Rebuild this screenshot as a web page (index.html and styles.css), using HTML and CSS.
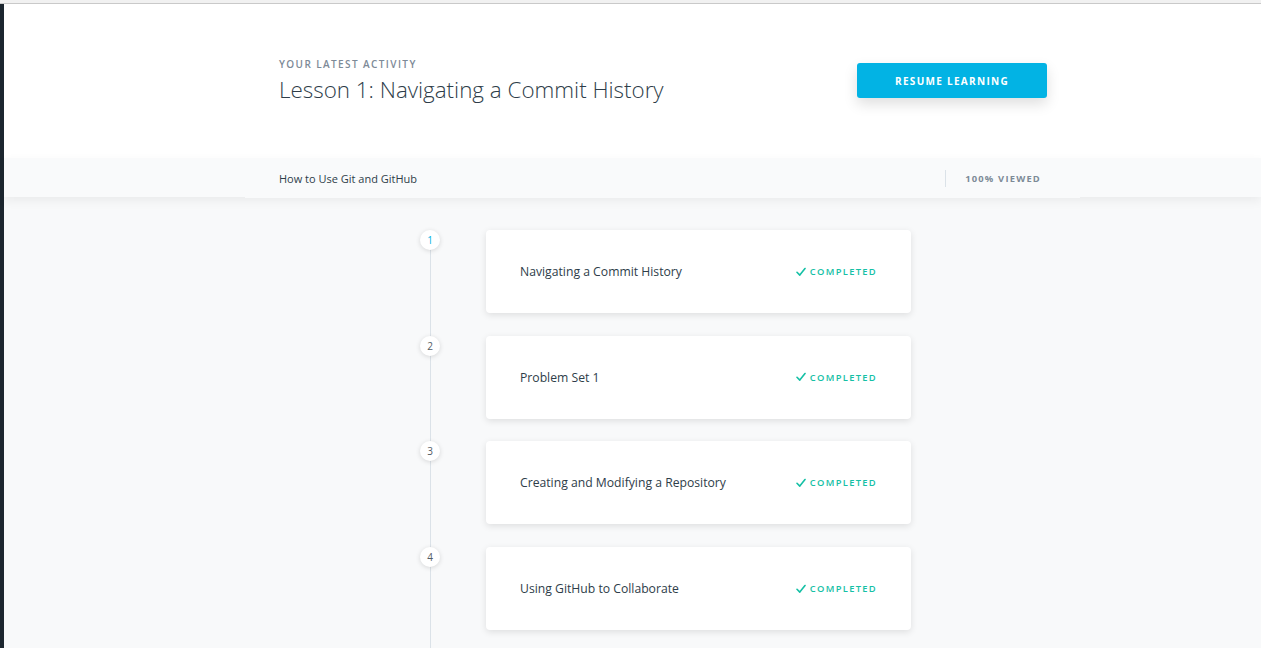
FILE: index.html
```html
<!DOCTYPE html>
<html lang="en">
<head>
<meta charset="utf-8">
<title>Lesson 1: Navigating a Commit History</title>
<link rel="stylesheet" href="styles.css">
</head>
<body>
<div class="topstrip"></div>
<div class="app">
  <aside class="rail"></aside>
  <main class="main">
    <header class="hero">
      <div class="hero-inner">
        <div class="hero-text">
          <div class="eyebrow">YOUR LATEST ACTIVITY</div>
          <h1 class="hero-title">Lesson 1: Navigating a Commit History</h1>
        </div>
        <button class="resume">RESUME LEARNING</button>
      </div>
    </header>
    <div class="subbar">
      <div class="subbar-inner">
        <span class="course">How to Use Git and GitHub</span>
        <span class="viewed">100% VIEWED</span>
      </div>
    </div>
    <section class="lessons">
      <ol class="timeline">
        <li class="item">
          <span class="dot dot-current">1</span>
          <div class="card">
            <span class="card-title">Navigating a Commit History</span>
            <span class="status"><svg class="check" viewBox="0 0 10 9" width="10" height="9"><path d="M1 4.8 L3.8 7.6 L9 1" fill="none" stroke="currentColor" stroke-width="1.6" stroke-linecap="round" stroke-linejoin="round"/></svg>COMPLETED</span>
          </div>
        </li>
        <li class="item">
          <span class="dot">2</span>
          <div class="card">
            <span class="card-title">Problem Set 1</span>
            <span class="status"><svg class="check" viewBox="0 0 10 9" width="10" height="9"><path d="M1 4.8 L3.8 7.6 L9 1" fill="none" stroke="currentColor" stroke-width="1.6" stroke-linecap="round" stroke-linejoin="round"/></svg>COMPLETED</span>
          </div>
        </li>
        <li class="item">
          <span class="dot">3</span>
          <div class="card">
            <span class="card-title">Creating and Modifying a Repository</span>
            <span class="status"><svg class="check" viewBox="0 0 10 9" width="10" height="9"><path d="M1 4.8 L3.8 7.6 L9 1" fill="none" stroke="currentColor" stroke-width="1.6" stroke-linecap="round" stroke-linejoin="round"/></svg>COMPLETED</span>
          </div>
        </li>
        <li class="item">
          <span class="dot">4</span>
          <div class="card">
            <span class="card-title">Using GitHub to Collaborate</span>
            <span class="status"><svg class="check" viewBox="0 0 10 9" width="10" height="9"><path d="M1 4.8 L3.8 7.6 L9 1" fill="none" stroke="currentColor" stroke-width="1.6" stroke-linecap="round" stroke-linejoin="round"/></svg>COMPLETED</span>
          </div>
        </li>
      </ol>
    </section>
  </main>
</div>
</body>
</html>
```

FILE: styles.css
```css
* { box-sizing: border-box; }
html, body { margin: 0; padding: 0; height: 100%; }
body {
  font-family: "Open Sans", "Liberation Sans", sans-serif;
  background: #f8f9fa;
  color: #2e3d49;
  overflow: hidden;
}
.topstrip {
  height: 4px;
  background: #f1f1f1;
  border-bottom: 1px solid #c9c9c9;
}
.app {
  display: flex;
  height: 644px;
  overflow: hidden;
}
.rail {
  width: 4px;
  flex: none;
  background: #1c262f;
}
.main {
  flex: 1;
  min-width: 0;
  background: #f8f9fa;
}
.hero {
  background: #fff;
  height: 155px;
  border-bottom: 1px solid #dfe3e6;
}
.hero-inner {
  width: 835px;
  margin-left: 241px;
  padding: 53px 33px 0 34px;
  display: flex;
  justify-content: space-between;
  align-items: flex-start;
}
.eyebrow {
  font-size: 10px;
  line-height: 14px;
  font-weight: 600;
  letter-spacing: 1.4px;
  color: #7d8a97;
}
.hero-title {
  margin: 3px 0 0;
  font-size: 22.4px;
  line-height: 32px;
  font-weight: 300;
  color: #2e3d49;
}
.resume {
  margin-top: 6px;
  width: 190px;
  height: 35px;
  border: 0;
  border-radius: 3px;
  background: #02b3e4;
  color: #fff;
  font-family: "Open Sans", "Liberation Sans", sans-serif;
  font-size: 10px;
  font-weight: 700;
  letter-spacing: 1.3px;
  box-shadow: 0 6px 14px rgba(0, 0, 0, 0.13);
  cursor: pointer;
}
.subbar {
  background: #f9fafb;
  height: 39px;
  box-shadow: 0 4px 10px rgba(0, 0, 0, 0.06);
  position: relative;
}
.subbar-inner {
  width: 835px;
  margin-left: 241px;
  margin-top: -1px;
  height: 40px;
  padding: 0 39px 0 34px;
  display: flex;
  align-items: center;
  justify-content: space-between;
  background: #f9fafb;
}
.course {
  font-size: 11px;
  color: #2e3d49;
}
.viewed {
  font-size: 9.4px;
  font-weight: 700;
  letter-spacing: 1.2px;
  color: #7d8a97;
  padding-left: 19px;
  border-left: 1px solid #dbe2e8;
  line-height: 17px;
}
.lessons {
  padding: 33px 0 0 416px;
}
.timeline {
  list-style: none;
  margin: 0;
  padding: 0 0 20px;
  background: linear-gradient(#dbe2e8, #dbe2e8) no-repeat 10px 10px / 1px 100%;
}
.item {
  display: flex;
  align-items: flex-start;
  gap: 46px;
  margin-bottom: 22.7px;
}
.item:last-child { margin-bottom: 0; }
.dot {
  flex: none;
  width: 20px;
  height: 20px;
  border-radius: 50%;
  background: #fff;
  box-shadow: 0 1px 5px rgba(0, 0, 0, 0.14);
  font-size: 10px;
  line-height: 20px;
  text-align: center;
  color: #525c65;
}
.dot-current { color: #02b3e4; }
.card {
  width: 425px;
  height: 83px;
  background: #fff;
  border-radius: 4px;
  box-shadow: 0 2px 7px rgba(0, 0, 0, 0.11);
  display: flex;
  align-items: center;
  justify-content: space-between;
  padding: 0 34px 0 34px;
}
.card-title {
  font-size: 12.2px;
  color: #2e3d49;
}
.status {
  display: flex;
  align-items: center;
  gap: 4px;
  font-size: 9.4px;
  font-weight: 600;
  letter-spacing: 1.3px;
  color: #15c0a5;
}
.check { display: block; width: 10px; height: 10px; color: #15c0a5; }
```
